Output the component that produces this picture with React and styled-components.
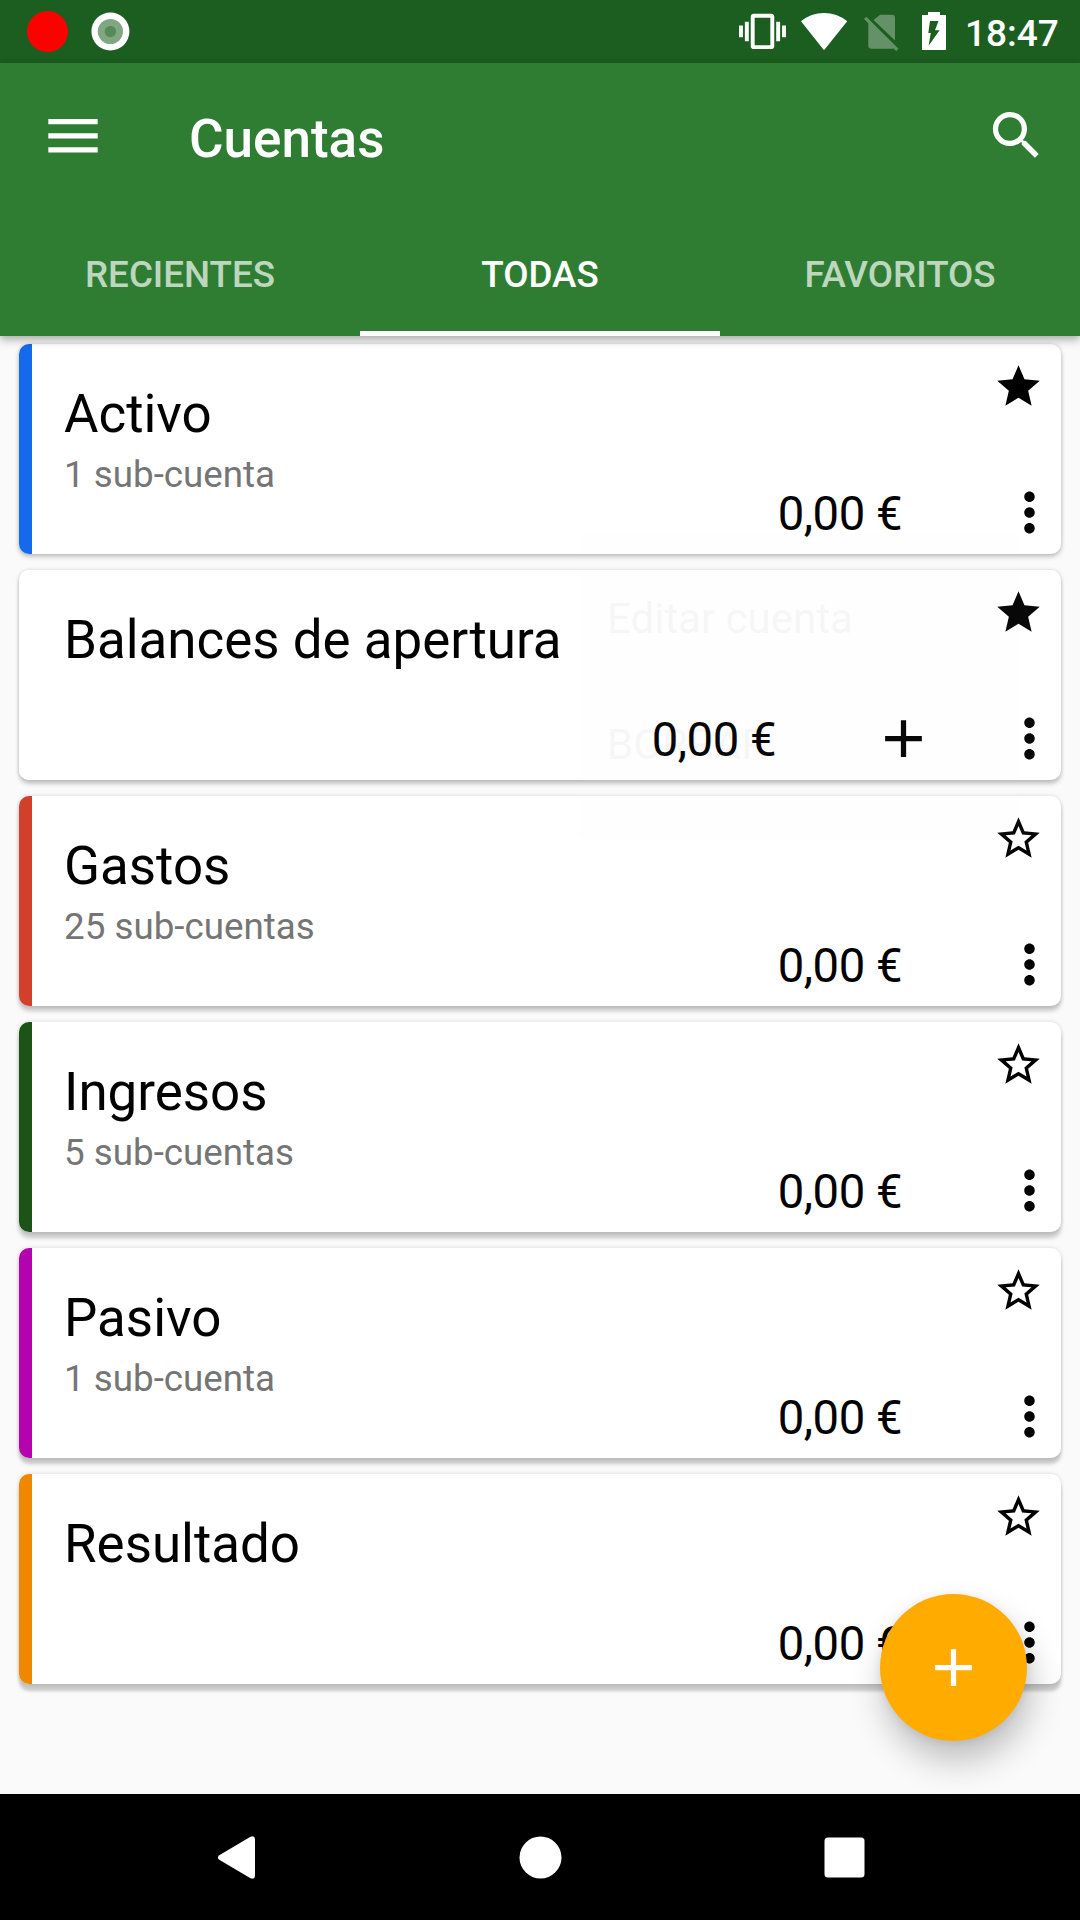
import React from "react";
import styled, { createGlobalStyle } from "styled-components";

const GlobalStyle = createGlobalStyle`
  * { box-sizing: border-box; }
  body { margin: 0; background: #fafafa; }
`;

const Screen = styled.div`
  position: relative;
  display: flex;
  flex-direction: column;
  width: 1080px;
  height: 1920px;
  overflow: hidden;
  background: #fafafa;
  color: #000;
  font-family: Roboto, sans-serif;
`;

const StatusBar = styled.header`
  display: flex;
  flex: none;
  justify-content: space-between;
  height: 63px;
  background: #1b5e20;
  color: #fff;
`;

const StatusGroup = styled.div`
  display: flex;
`;

const Clock = styled.span`
  width: 118px;
  padding: 12px 0 0 3px;
  font-size: 37px;
  font-weight: 500;
  line-height: 43px;
`;

const AppBar = styled.div`
  z-index: 1;
  flex: none;
  height: 273px;
  background: #2e7d32;
  color: #fff;
  box-shadow: 0 5px 8px rgba(0, 0, 0, 0.24), 0 0 6px rgba(0, 0, 0, 0.12);
`;

const Toolbar = styled.div`
  display: flex;
  align-items: center;
  height: 147px;
  padding: 0 32px 2px 42px;
`;

const Title = styled.h1`
  flex: 1;
  margin: 6px 0 0 84px;
  font-size: 53px;
  font-weight: 500;
  line-height: 62px;
`;

const Tabs = styled.nav`
  display: grid;
  grid-template-columns: repeat(3, 1fr);
  height: 126px;
`;

const Tab = styled.div`
  display: flex;
  align-items: center;
  justify-content: center;
  padding-top: 7px;
  border-bottom: 5px solid ${(p) => (p.$active ? "#fff" : "transparent")};
  color: ${(p) => (p.$active ? "#fff" : "rgba(255, 255, 255, 0.7)")};
  font-size: 36.75px;
  font-weight: 500;
`;

const AccountList = styled.main`
  display: flex;
  flex: 1;
  flex-direction: column;
  gap: 16px;
  padding: 8px 19px 0;
`;

const Card = styled.article`
  display: flex;
  flex: none;
  height: 210px;
  overflow: hidden;
  border-radius: 10px;
  background: #fff;
  box-shadow:
    0 ${(p) => 3 + p.$depth * 0.7}px ${(p) => 5 - p.$depth * 0.3}px rgba(0, 0, 0, 0.2),
    0 0 4px rgba(0, 0, 0, 0.14);
`;

const Stripe = styled.div`
  width: 13px;
  background: ${(p) => p.$color};
`;

const CardText = styled.div`
  flex: 1;
  padding: 39px 0 0 32px;
  white-space: nowrap;
`;

const AccountName = styled.h2`
  margin: 0;
  font-size: 52.9px;
  font-weight: 400;
  line-height: 62px;
`;

const SubAccounts = styled.p`
  margin: 8px 0 0;
  color: #757575;
  font-size: 36.75px;
  line-height: 43px;
`;

const CardControls = styled.div`
  display: flex;
  flex-direction: column;
  align-items: flex-end;
  justify-content: space-between;
  padding: 16.5px 0 10.5px;
`;

const StarSlot = styled.div`
  display: flex;
  padding-right: 17px;
`;

const Balance = styled.div`
  display: flex;
  align-items: center;
`;

const Amount = styled.span`
  margin-right: 96px;
  padding-top: 4px;
  font-size: 47.25px;
  letter-spacing: -0.5px;
  line-height: 56px;
  white-space: nowrap;
`;

const AddSlot = styled.div`
  display: flex;
  margin-right: 63px;
`;

const IconBox = styled.svg`
  display: block;
  flex: none;
`;

const FadingMenu = styled.div`
  position: absolute;
  top: 534px;
  left: 577px;
  z-index: 2;
  width: 503px;
  height: 305px;
  padding: 21px 30px;
  border-radius: 10px;
  background: #fafafa;
  opacity: 0.03;
`;

const MenuItem = styled.div`
  display: flex;
  align-items: center;
  height: 126px;
  font-size: 42px;
`;

const Fab = styled.button`
  position: absolute;
  right: 53px;
  bottom: 179px;
  z-index: 3;
  display: grid;
  place-items: center;
  width: 147px;
  height: 147px;
  padding: 0;
  border: 0;
  border-radius: 50%;
  background: #ffab00;
  color: #fff;
  box-shadow: 4px 20px 34px rgba(0, 0, 0, 0.24), 0 2px 10px rgba(0, 0, 0, 0.08);
`;

const NavBar = styled.footer`
  display: flex;
  flex: none;
  align-items: center;
  justify-content: center;
  gap: 241px;
  height: 126px;
  background: #000;
`;

const Icon = ({ size, d }) => (
  <IconBox width={size} height={size} viewBox="0 0 24 24" fill="currentColor">
    <path d={d} />
  </IconBox>
);

const SEARCH =
  "M15.5 14h-.79l-.28-.27C15.41 12.59 16 11.11 16 9.5 16 5.91 13.09 3 9.5 3S3 5.91 3 9.5 5.91 16 9.5 16c1.61 0 3.09-.59 4.23-1.57l.27.28v.79l5 4.99L20.49 19l-4.99-5zm-6 0C7.01 14 5 11.99 5 9.5S7.01 5 9.5 5 14 7.01 14 9.5 11.99 14 9.5 14z";
const STAR =
  "M12 17.27L18.18 21l-1.64-7.03L22 9.24l-7.19-.61L12 2 9.19 8.63 2 9.24l5.46 4.73L5.82 21z";
const STAR_OUTLINE =
  "M22 9.24l-7.19-.62L12 2 9.19 8.63 2 9.24l5.46 4.73L5.82 21 12 17.27 18.18 21l-1.63-7.03L22 9.24zM12 15.4l-3.76 2.27 1-4.28-3.32-2.88 4.38-.38L12 6.1l1.71 4.04 4.38.38-3.32 2.88 1 4.28L12 15.4z";
const MORE =
  "M12 8c1.1 0 2-.9 2-2s-.9-2-2-2-2 .9-2 2 .9 2 2 2zm0 2c-1.1 0-2 .9-2 2s.9 2 2 2 2-.9 2-2-.9-2-2-2zm0 6c-1.1 0-2 .9-2 2s.9 2 2 2 2-.9 2-2-.9-2-2-2z";
const ADD = "M19 13h-6v6h-2v-6H5v-2h6V5h2v6h6v2z";

const accounts = [
  { name: "Activo", sub: "1 sub-cuenta", color: "#1569ec", favorite: true },
  { name: "Balances de apertura", color: "#fff", favorite: true, canAdd: true },
  { name: "Gastos", sub: "25 sub-cuentas", color: "#d23f2b" },
  { name: "Ingresos", sub: "5 sub-cuentas", color: "#1c5417" },
  { name: "Pasivo", sub: "1 sub-cuenta", color: "#b402ae" },
  { name: "Resultado", color: "#ef8700" },
];

const StatusNotifications = () => (
  <IconBox width="140" height="63" viewBox="0 0 140 63">
    <circle cx="47.5" cy="31.5" r="20.5" fill="#f00" />
    <circle cx="110.4" cy="31.5" r="19" fill="#fff" />
    <circle cx="110.4" cy="31.5" r="12.6" fill="#80a682" />
    <circle cx="110.4" cy="31.5" r="5.7" fill="#558b58" />
  </IconBox>
);

const StatusSystem = () => (
  <IconBox width="262" height="63" viewBox="700 0 262 63" fill="#fff">
    <g transform="translate(739 8) scale(1.958)">
      <path d="M0 15h2V9H0v6zm3 2h2V7H3v10zm19-8v6h2V9h-2zm-3 8h2V7h-2v10zM16.5 3h-9C6.67 3 6 3.67 6 4.5v15c0 .83.67 1.5 1.5 1.5h9c.83 0 1.5-.67 1.5-1.5v-15c0-.83-.67-1.5-1.5-1.5zM16 19H8V5h8v14z" />
    </g>
    <path d="M824 50.2 801 21.2Q811 13 824 13T847.2 21.2Z" />
    <g fill="#659168">
      <path d="M895 40.5V18q0-3.300-3.300-3.300H880L873.500 20Z" />
      <path d="M864 19 866.300 16.800 898.500 48.800 896.200 51 893.600 48.500Q892.900 48.800 891.700 48.800H871.600Q868.300 48.800 868.300 45.500V23.300Z" />
    </g>
    <path d="M928 12h12v3h6v35h-24V15h6z" />
    <path d="M930 21h8.500l-3.500 9.300h4.600L928.600 45.800 930.800 33H928.300z" fill="#1b5e20" />
  </IconBox>
);

const AccountCard = ({ name, sub, color, favorite, canAdd, depth }) => (
  <Card $depth={depth}>
    <Stripe $color={color} />
    <CardText>
      <AccountName>{name}</AccountName>
      {sub && <SubAccounts>{sub}</SubAccounts>}
    </CardText>
    <CardControls>
      <StarSlot>
        <Icon size={51} d={favorite ? STAR : STAR_OUTLINE} />
      </StarSlot>
      <Balance>
        <Amount>0,00 €</Amount>
        {canAdd && (
          <AddSlot>
            <Icon size={63} d={ADD} />
          </AddSlot>
        )}
        <Icon size={63} d={MORE} />
      </Balance>
    </CardControls>
  </Card>
);

export default function App() {
  return (
    <Screen>
      <GlobalStyle />
      <StatusBar>
        <StatusNotifications />
        <StatusGroup>
          <StatusSystem />
          <Clock>18:47</Clock>
        </StatusGroup>
      </StatusBar>
      <AppBar>
        <Toolbar>
          <IconBox width="63" height="63" viewBox="0 0 63 63" fill="#fff">
            <path d="M6.300 15h49.400v5.300H6.300zM6.300 29.200h49.400v5.300H6.300zM6.300 43.300h49.400v5.300H6.300z" />
          </IconBox>
          <Title>Cuentas</Title>
          <Icon size={63} d={SEARCH} />
        </Toolbar>
        <Tabs>
          <Tab>RECIENTES</Tab>
          <Tab $active>TODAS</Tab>
          <Tab>FAVORITOS</Tab>
        </Tabs>
      </AppBar>
      <AccountList>
        {accounts.map((account, index) => (
          <AccountCard key={account.name} depth={index} {...account} />
        ))}
      </AccountList>
      <FadingMenu>
        <MenuItem>Editar cuenta</MenuItem>
        <MenuItem>BORRAR</MenuItem>
      </FadingMenu>
      <Fab aria-label="+">
        <Icon size={63} d={ADD} />
      </Fab>
      <NavBar>
        <IconBox width="63" height="63" viewBox="0 0 63 63" fill="#fff">
          <path d="M14.300 29.200 45.500 10.800Q49.700 9.300 50 13V50Q49.700 53.700 45.500 52.200L14.300 33.800Q11.300 31.500 14.300 29.200Z" />
        </IconBox>
        <IconBox width="63" height="63" viewBox="0 0 63 63" fill="#fff">
          <circle cx="31.500" cy="31.500" r="21" />
        </IconBox>
        <IconBox width="63" height="63" viewBox="0 0 63 63" fill="#fff">
          <rect x="11.500" y="11.500" width="40" height="40" rx="3.500" />
        </IconBox>
      </NavBar>
    </Screen>
  );
}
